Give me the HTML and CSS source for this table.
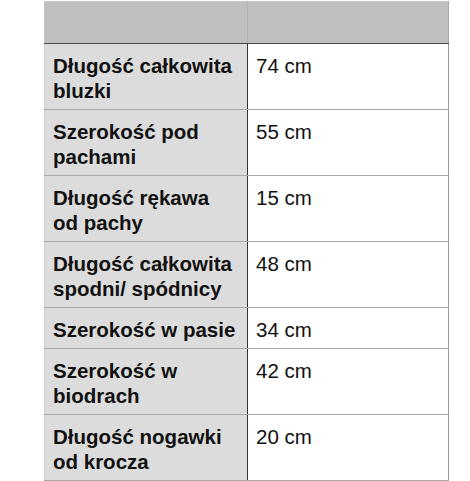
FILE: index.html
```html
<!DOCTYPE html>
<html lang="pl">
<head>
<meta charset="utf-8">
<link rel="stylesheet" href="styles.css">
</head>
<body>
<table class="sizes">
  <thead>
    <tr><th class="h1"></th><th class="h2"></th></tr>
  </thead>
  <tbody>
    <tr><td class="label">Długość całkowita bluzki</td><td class="val">74 cm</td></tr>
    <tr><td class="label">Szerokość pod pachami</td><td class="val">55 cm</td></tr>
    <tr><td class="label">Długość rękawa od pachy</td><td class="val">15 cm</td></tr>
    <tr><td class="label">Długość całkowita spodni/ spódnicy</td><td class="val">48 cm</td></tr>
    <tr><td class="label">Szerokość w pasie</td><td class="val">34 cm</td></tr>
    <tr><td class="label">Szerokość w biodrach</td><td class="val">42 cm</td></tr>
    <tr><td class="label">Długość nogawki od krocza</td><td class="val">20 cm</td></tr>
  </tbody>
</table>
</body>
</html>
```
FILE: styles.css
```css
html, body {
  margin: 0;
  padding: 0;
  background: #ffffff;
}
body {
  font-family: "Liberation Sans", Arial, sans-serif;
  font-size: 20.5px;
  line-height: 25px;
  color: #111;
  overflow: hidden;
}
.sizes {
  margin: 1px 0 0 44px;
  border-collapse: collapse;
  table-layout: fixed;
  width: 405px;
}
.sizes th {
  background: #bec0bf;
  height: 41px;
  padding: 0;
  border-left: 1px solid #c6c6c6;
  border-right: 1px solid #a9a9a9;
  border-top: 1px solid #c6c6c6;
  border-bottom: 1px solid #4a4a4a;
}
.sizes .h1 { width: 202px; border-right-color: #b0b2b1; }
.sizes td {
  vertical-align: top;
  padding: 9px 8px 6px 8px;
  border-bottom: 1px solid #a8a8a8;
}
.label {
  background: #dcdcdc;
  font-weight: bold;
  border-right: 1px solid #333;
  border-left: 1px solid #d0d0d0;
}
.val {
  background: #fff;
  border-right: 1px solid #999;
}
```
